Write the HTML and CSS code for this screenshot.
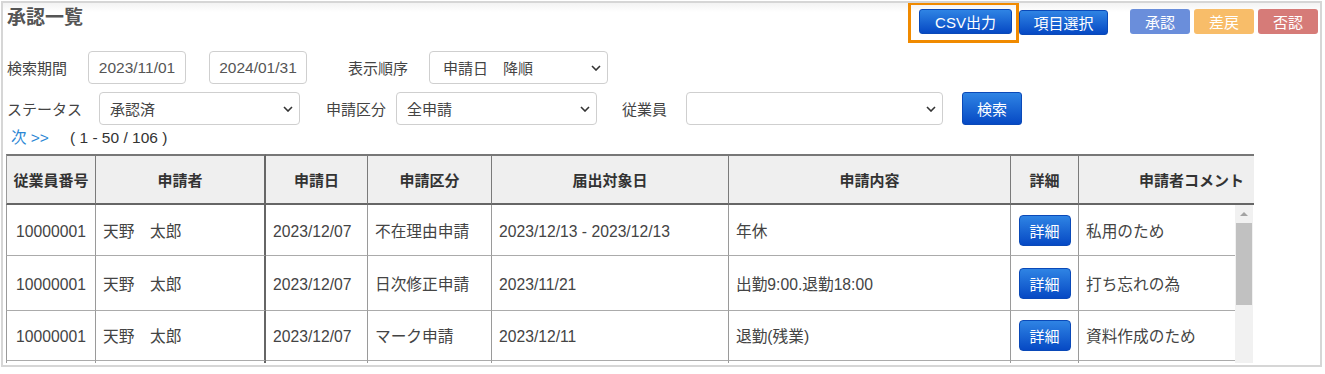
FILE: index.html
```html
<!DOCTYPE html>
<html lang="ja">
<head>
  <meta charset="UTF-8" />
  <title>承認一覧</title>
  <link rel="stylesheet" href="styles.css">
</head>
<body>
  <div class="page">

    <!-- Title and action buttons -->
    <div class="top">
      <h1 class="title">承認一覧</h1>
      <div class="actions">
        <span class="mark"><button class="btn btn-blue btn-csv">CSV出力</button></span>
        <button class="btn btn-blue btn-items">項目選択</button>
        <div class="status-btns">
          <button class="btn btn-approve">承認</button>
          <button class="btn btn-return">差戻</button>
          <button class="btn btn-reject">否認</button>
        </div>
      </div>
    </div>

    <!-- Search conditions -->
    <div class="filter-row row-1">
      <label class="lbl lbl-period">検索期間</label>
      <input class="date" type="text" value="2023/11/01">
      <input class="date date-to" type="text" value="2024/01/31">
      <label class="lbl lbl-order">表示順序</label>
      <div class="select sel-order">
        <span>申請日　降順</span>
        <svg width="10" height="6" viewBox="0 0 10 6"><path d="M1 1l4 4 4-4" fill="none" stroke="#333" stroke-width="1.6"/></svg>
      </div>
    </div>
    <div class="filter-row row-2">
      <label class="lbl lbl-status">ステータス</label>
      <div class="select sel-status">
        <span>承認済</span>
        <svg width="10" height="6" viewBox="0 0 10 6"><path d="M1 1l4 4 4-4" fill="none" stroke="#333" stroke-width="1.6"/></svg>
      </div>
      <label class="lbl lbl-kind">申請区分</label>
      <div class="select sel-kind">
        <span>全申請</span>
        <svg width="10" height="6" viewBox="0 0 10 6"><path d="M1 1l4 4 4-4" fill="none" stroke="#333" stroke-width="1.6"/></svg>
      </div>
      <label class="lbl lbl-emp">従業員</label>
      <div class="select sel-emp">
        <span></span>
        <svg width="10" height="6" viewBox="0 0 10 6"><path d="M1 1l4 4 4-4" fill="none" stroke="#333" stroke-width="1.6"/></svg>
      </div>
      <button class="btn btn-blue btn-search">検索</button>
    </div>

    <!-- Paging -->
    <div class="pager">
      <a href="#" class="next">次 &gt;&gt;</a>
      <span class="count">( 1 - 50 / 106 )</span>
    </div>

    <!-- List -->
    <div class="list">
      <table class="grid head">
        <tr>
          <th class="c-no">従業員番号</th>
          <th class="c-name">申請者</th>
          <th class="c-date">申請日</th>
          <th class="c-kind">申請区分</th>
          <th class="c-target">届出対象日</th>
          <th class="c-content">申請内容</th>
          <th class="c-detail">詳細</th>
          <th class="c-comment">申請者コメント</th>
        </tr>
      </table>
      <div class="body-wrap">
        <table class="grid body">
          <tr class="r1">
            <td class="c-no num">10000001</td>
            <td class="c-name">天野　太郎</td>
            <td class="c-date">2023/12/07</td>
            <td class="c-kind">不在理由申請</td>
            <td class="c-target">2023/12/13 - 2023/12/13</td>
            <td class="c-content">年休</td>
            <td class="c-detail"><button class="btn btn-blue btn-detail">詳細</button></td>
            <td class="c-comment">私用のため</td>
          </tr>
          <tr class="r2">
            <td class="c-no num">10000001</td>
            <td class="c-name">天野　太郎</td>
            <td class="c-date">2023/12/07</td>
            <td class="c-kind">日次修正申請</td>
            <td class="c-target">2023/11/21</td>
            <td class="c-content">出勤9:00.退勤18:00</td>
            <td class="c-detail"><button class="btn btn-blue btn-detail">詳細</button></td>
            <td class="c-comment">打ち忘れの為</td>
          </tr>
          <tr class="r3">
            <td class="c-no num">10000001</td>
            <td class="c-name">天野　太郎</td>
            <td class="c-date">2023/12/07</td>
            <td class="c-kind">マーク申請</td>
            <td class="c-target">2023/12/11</td>
            <td class="c-content">退勤(残業)</td>
            <td class="c-detail"><button class="btn btn-blue btn-detail">詳細</button></td>
            <td class="c-comment">資料作成のため</td>
          </tr>
          <tr>
            <td class="c-no num"></td>
            <td class="c-name"></td>
            <td class="c-date"></td>
            <td class="c-kind"></td>
            <td class="c-target"></td>
            <td class="c-content"></td>
            <td class="c-detail"></td>
            <td class="c-comment"></td>
          </tr>
        </table>
        <div class="scrollbar">
          <div class="arrow"></div>
          <div class="thumb"></div>
        </div>
      </div>
    </div>

  </div>
</body>
</html>
```

FILE: styles.css
```css
* {
  margin: 0;
  padding: 0;
  box-sizing: border-box;
  font-family: "Liberation Sans", "Noto Sans CJK JP", sans-serif;
}
body {
  background: #fff;
  color: #444;
  font-size: 15px;
}
.page {
  width: 1321px;
  height: 366px;
  margin: 1px 0 0 1px;
  border: 2px solid #d6d6d6;
  overflow: hidden;
}

/* Title bar */
.top {
  display: flex;
  justify-content: space-between;
  height: 41px;
  background: linear-gradient(#f3f3f3, #fff 9px);
}
.title {
  font-size: 19px;
  font-weight: bold;
  color: #555;
  padding: 2px 0 0 4px;
  line-height: 26px;
}
.actions {
  display: flex;
  align-items: flex-start;
  margin-right: 2px;
}
.mark {
  display: block;
  border: 3px solid #f08a00;
  padding: 4px 4px 6px 8px;
  margin-top: -1px;
}
.btn {
  border: none;
  border-radius: 3px;
  color: #fff;
  font-size: 15px;
  cursor: pointer;
}
.btn-blue {
  background: linear-gradient(#2f84e4, #0649c4);
  border: 1px solid #0a49b8;
}
.btn-csv {
  display: block;
  width: 93px;
  height: 25px;
}
.btn-items {
  width: 89px;
  height: 25px;
  margin-top: 7px;
}
.status-btns {
  display: flex;
  gap: 4px;
  margin: 6px 0 0 22px;
}
.status-btns .btn {
  width: 60px;
  height: 25px;
}
.btn-approve {
  background: #6a8edb;
}
.btn-return {
  background: #f8bd69;
}
.btn-reject {
  background: #d67b78;
}

/* Search conditions */
.filter-row {
  display: flex;
  align-items: center;
  height: 33px;
  padding-left: 4px;
}
.row-1 {
  margin-top: 7px;
}
.row-2 {
  margin-top: 8px;
}
.lbl {
  color: #444;
  font-size: 15px;
}
.lbl-period { width: 81px; }
.lbl-order { width: 81px; margin-left: 41px; }
.lbl-status { width: 92px; }
.lbl-kind { width: 70px; margin-left: 26px; }
.lbl-emp { width: 64px; margin-left: 25px; }
.date {
  width: 98px;
  height: 33px;
  border: 1px solid #cfcfcf;
  border-radius: 4px;
  text-align: center;
  font-size: 15.5px;
  color: #555;
}
.date-to {
  margin-left: 23px;
}
.select {
  display: flex;
  align-items: center;
  justify-content: space-between;
  height: 33px;
  border: 1px solid #cfcfcf;
  border-radius: 4px;
  padding: 0 6px 0 10px;
  color: #444;
}
.sel-order { width: 179px; padding-left: 13px; }
.sel-status { width: 201px; }
.sel-kind { width: 201px; }
.sel-emp { width: 257px; }
.btn-search {
  width: 60px;
  height: 33px;
  margin-left: 19px;
}

/* Paging */
.pager {
  display: flex;
  height: 22px;
  line-height: 22px;
  margin-top: 2px;
  padding-left: 8px;
  font-size: 15.5px;
}
.next {
  color: #2a86d4;
  text-decoration: none;
  width: 59px;
}
.count {
  color: #333;
}

/* List */
.list {
  margin: 5px 0 0 3px;
}
.grid {
  border-collapse: separate;
  border-spacing: 0;
  table-layout: fixed;
}
.grid th,
.grid td {
  border-right: 1px solid #9a9a9a;
  border-bottom: 1px solid #ababab;
  white-space: nowrap;
  overflow: hidden;
}
.grid th:first-child,
.grid td:first-child {
  border-left: 1px solid #9a9a9a;
}
.grid .c-name {
  border-right: 2px solid #666;
}
.head {
  width: 1248px;
}
.head th {
  height: 51px;
  background: #efefef;
  color: #333;
  font-weight: bold;
  font-size: 15px;
  text-align: center;
  border-top: 2px solid #777;
  border-bottom: 2px solid #666;
  border-right-color: #7a7a7a;
}
.head th.c-comment {
  border-right: none;
  text-align: right;
  padding-right: 10px;
}
.c-no { width: 90px; }
.c-name { width: 170px; }
.c-date { width: 102px; }
.c-kind { width: 124px; }
.c-target { width: 237px; }
.c-content { width: 282px; }
.c-detail { width: 68px; }
.head .c-comment { width: 175px; }
.body .c-comment { width: 156px; }

.body-wrap {
  display: flex;
  width: 1248px;
  height: 158px;
  overflow: hidden;
}
.body {
  width: 1229px;
  flex: none;
}
.body td {
  height: 52px;
  padding: 3px 0 0 7px;
  color: #444;
  font-size: 15.7px;
  line-height: 22px;
}
.body .r1 td { height: 51px; }
.body .r2 td { height: 55px; }
.body .r3 td { height: 50px; }
.body td.num {
  text-align: center;
  padding-left: 0;
}
.body td.c-detail {
  text-align: center;
  padding: 0;
}
.body td.c-comment {
  border-right: none;
}
.btn-detail {
  width: 52px;
  height: 31px;
  border-radius: 4px;
  vertical-align: middle;
}
.scrollbar {
  width: 18px;
  background: #f1f1f1;
  flex: none;
  padding: 0 1px;
}
.arrow {
  height: 18px;
  display: flex;
  justify-content: center;
  align-items: center;
}
.arrow::before {
  content: "";
  border-left: 4px solid transparent;
  border-right: 4px solid transparent;
  border-bottom: 4px solid #a3a3a3;
}
.thumb {
  height: 82px;
  background: #c1c1c1;
}
```
